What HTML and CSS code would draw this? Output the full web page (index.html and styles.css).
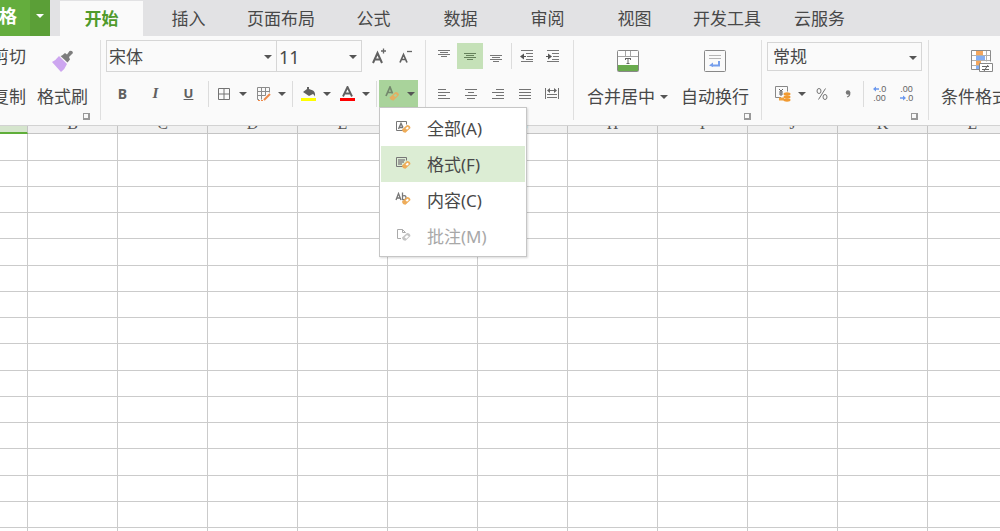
FILE: index.html
```html
<!DOCTYPE html>
<html lang="zh-CN">
<head>
<meta charset="utf-8">
<title>表格</title>
<link rel="stylesheet" href="styles.css">
</head>
<body>
<nav class="tabs">
  <button class="brand"><span class="brand-name">表格</span><span class="brand-drop"><i class="caret"></i></span></button>
  <a class="tab active" href="#">开始</a>
  <a class="tab" href="#">插入</a>
  <a class="tab" href="#">页面布局</a>
  <a class="tab" href="#">公式</a>
  <a class="tab" href="#">数据</a>
  <a class="tab" href="#">审阅</a>
  <a class="tab" href="#">视图</a>
  <a class="tab" href="#">开发工具</a>
  <a class="tab" href="#">云服务</a>
</nav>

<header class="ribbon">
  <section class="group clipboard">
    <div class="clip-col">
      <button class="text-btn">剪切</button>
      <button class="text-btn">复制</button>
    </div>
    <button class="big-btn painter">
      <svg width="22" height="22" viewBox="0 0 22 22"><path d="M10 5.500l3-2.500 2 1.500L17.500 1q3-1 3.500 2l-4 4 1 2.500-2.500 3L8.500 6z" fill="#7d7d7d"/><path d="M7 6l8 8q-2 5-6 8L0 12q4-2 7-6z" fill="#cda6f0"/></svg>
      <span>格式刷</span>
    </button>
    <button class="launcher" aria-label="剪贴板设置"></button>
  </section>

  <section class="group font">
    <div class="row top">
      <label class="pick family"><select aria-label="字体"><option>宋体</option></select></label>
      <label class="pick size"><select aria-label="字号"><option>11</option></select></label>
      <button class="icon-btn grow" aria-label="增大字号"><svg width="16" height="18" viewBox="0 0 16 18"><path d="M2 16L6.500 6L11 16M3.500 12.500H9.500" fill="none" stroke="#606060" stroke-width="2"/><path d="M10 4h5M12.500 1.500v5" stroke="#666" stroke-width="1.300" fill="none"/></svg></button>
      <button class="icon-btn" aria-label="减小字号"><svg width="16" height="18" viewBox="0 0 16 18"><path d="M3 15.500L6.500 7.500L10 15.500M4 12.500H9" fill="none" stroke="#606060" stroke-width="1.700"/><path d="M10 4.500h5" stroke="#666" stroke-width="1.300" fill="none"/></svg></button>
    </div>
    <div class="row bottom">
      <button class="style-btn bold">B</button>
      <button class="style-btn italic">I</button>
      <button class="style-btn underline">U</button>
      <span class="rule"></span>
      <button class="drop-btn" aria-label="边框"><svg width="14" height="14" viewBox="0 0 14 14"><path d="M1.500 1.500h11v11h-11zM7 1.500v11M1.500 7h11" fill="none" stroke="#737373"/></svg><i class="caret"></i></button>
      <button class="drop-btn" aria-label="绘图边框"><svg width="15" height="14" viewBox="0 0 15 14"><path d="M3 12.500H1.500v-12h12v5M1.500 4.500h12M1.500 8.500h8M5.500 .5v12M9.500 .5v8" fill="none" stroke="#8c8c8c"/><path d="M2 13.500h5" stroke="#ee8a4a" stroke-dasharray="2 1"/><path d="M8 13l6-6" fill="none" stroke="#ee8a4a" stroke-width="2"/></svg><i class="caret"></i></button>
      <span class="rule"></span>
      <button class="drop-btn" aria-label="填充颜色"><svg width="15" height="16" viewBox="0 0 15 16"><path d="M2 6l4-3V1h2v2l4 1.500q2.500 1.500 2 6-1-2-2-2.500L8 10z" fill="#606060"/><path d="M0 12h15v3H0z" fill="#ff0"/></svg><i class="caret"></i></button>
      <button class="drop-btn" aria-label="字体颜色"><svg width="15" height="16" viewBox="0 0 15 16"><path d="M3 10.500L7.500 1L12 10.500M4.500 7.500h6" fill="none" stroke="#606060" stroke-width="1.900"/><path d="M0 12h15v3H0z" fill="#f00"/></svg><i class="caret"></i></button>
      <span class="rule"></span>
      <div class="clear">
        <button class="drop-btn open" aria-label="清除" aria-expanded="true"><svg width="15" height="15" viewBox="0 0 15 15"><path d="M1 10L5 1L7.500 7.500M2.500 6.500h5" fill="none" stroke="#73876c" stroke-width="1.700"/><path d="M4.500 11.500l6-5.500q3 0 3.500 3L8.500 14.500q-3 0-4-3z" fill="#e6ae61"/><path d="M8.500 9.500l2-1.800 1.800 1.500-2 1.800z" fill="#a9d39b"/></svg><i class="caret"></i></button>
        <div class="menu" role="menu">
          <button class="item" role="menuitem"><svg width="16" height="14" viewBox="0 0 16 14"><path d="M8 10.500H1.500v-9h10v3" fill="none" stroke="#777"/><path d="M3.500 9L6 3.500l2 4M4 7.500h4" fill="none" stroke="#777" stroke-width="1.400"/><path d="M7 9.500l5-4.500q3 0 3.500 3L10.500 12.800q-3 0-3.500-3.300z" fill="#eeac59"/><path d="M10.500 8.300l2-1.500 1.500 1.300-2 1.700z" fill="#fff"/></svg><span>全部(A)</span></button>
          <button class="item hover" role="menuitem"><svg width="16" height="14" viewBox="0 0 16 14"><path d="M8 10.500H1.500v-9h10v3" fill="none" stroke="#777"/><path d="M3 4h7M3 6h6M3 8h4" stroke="#888" stroke-width="1.300"/><path d="M7 9.500l5-4.500q3 0 3.500 3L10.500 12.800q-3 0-3.500-3.300z" fill="#eeac59"/><path d="M10.500 8.300l2-1.500 1.500 1.300-2 1.700z" fill="#fff"/></svg><span>格式(F)</span></button>
          <button class="item" role="menuitem"><svg width="16" height="14" viewBox="0 0 16 14"><path d="M1 8l2.500-6.500L6 8M2 6h3.500M7.500 .5v7q3.500 .5 3.500-2T7.500 4" fill="none" stroke="#777" stroke-width="1.300"/><path d="M7 9.500l5-4.500q3 0 3.500 3L10.500 12.800q-3 0-3.500-3.300z" fill="#eeac59"/><path d="M10.500 8.300l2-1.500 1.500 1.300-2 1.700z" fill="#fff"/></svg><span>内容(C)</span></button>
          <button class="item" role="menuitem" disabled><svg width="16" height="14" viewBox="0 0 16 14"><path d="M6 10.500H2.500v-9h5l3 3M7.500 1.500v3h3" fill="none" stroke="#aaa"/><path d="M7 9.500l5-4.500q3 0 3.500 3L10.500 12.800q-3 0-3.500-3.300z" fill="#c4c4c4"/><path d="M9.500 9.200l2.500-2.200 1.800 1.500-2.500 2.200z" fill="#fff"/></svg><span>批注(M)</span></button>
        </div>
      </div>
    </div>
  </section>

  <section class="group align">
    <div class="row top">
      <button class="icon-btn" aria-label="顶端对齐"><svg width="14" height="16" viewBox="0 0 14 16"><path d="M1 2.500h12M3 4.500h8M1 6.500h12M4 8.500h6" stroke="#777"/></svg></button>
      <button class="icon-btn on" aria-label="垂直居中"><svg width="14" height="16" viewBox="0 0 14 16"><path d="M1 5.500h12M3 7.500h8M1 9.500h12M4 11.500h6" stroke="#65805b"/></svg></button>
      <button class="icon-btn" aria-label="底端对齐"><svg width="14" height="16" viewBox="0 0 14 16"><path d="M1 7.500h12M3 9.500h8M1 11.500h12M4 13.500h6" stroke="#777"/></svg></button>
      <span class="rule"></span>
      <button class="icon-btn" aria-label="减少缩进"><svg width="14" height="16" viewBox="0 0 14 16"><path d="M1 2.500h12M6 5.500h7M7 8.500h6M6 11.500h7M1 13.500h12" stroke="#777"/><path d="M2 8.500h4" stroke="#555"/><path d="M0 8.500l4-3v6z" fill="#555"/></svg></button>
      <button class="icon-btn" aria-label="增加缩进"><svg width="14" height="16" viewBox="0 0 14 16"><path d="M1 2.500h12M6 5.500h7M7 8.500h6M6 11.500h7M1 13.500h12" stroke="#777"/><path d="M0 8.500h4" stroke="#555"/><path d="M6 8.500l-4-3v6z" fill="#555"/></svg></button>
    </div>
    <div class="row bottom">
      <button class="icon-btn" aria-label="左对齐"><svg width="14" height="14" viewBox="0 0 14 14"><path d="M1 2.500h8M1 5.500h12M1 8.500h8M1 11.500h12" stroke="#737373"/></svg></button>
      <button class="icon-btn" aria-label="居中"><svg width="14" height="14" viewBox="0 0 14 14"><path d="M1 2.500h12M4 5.500h6M1 8.500h12M3 11.500h8" stroke="#737373"/></svg></button>
      <button class="icon-btn" aria-label="右对齐"><svg width="14" height="14" viewBox="0 0 14 14"><path d="M5 2.500h8M1 5.500h12M5 8.500h8M1 11.500h12" stroke="#737373"/></svg></button>
      <button class="icon-btn" aria-label="两端对齐"><svg width="14" height="14" viewBox="0 0 14 14"><path d="M1 2.500h12M1 5.500h12M1 8.500h12M1 11.500h12" stroke="#737373"/></svg></button>
      <button class="icon-btn" aria-label="分散对齐"><svg width="16" height="14" viewBox="0 0 16 14"><path d="M1.500 1v11M14.500 1v11M4 3.500h8M3 7.500h10M3 10.500h10" stroke="#737373"/><path d="M3 3.500l3-2.500v5zM13 3.500l-3-2.500v5z" fill="#666"/></svg></button>
    </div>
  </section>

  <section class="group cells">
    <button class="big-btn">
      <svg width="22" height="22" viewBox="0 0 22 22"><rect x=".5" y=".5" width="21" height="21" rx="1" fill="#fff" stroke="#888"/><path d="M1 6.500h20M8.500 1v5M13.500 1v5" stroke="#a5a5a5"/><path d="M8 8.500h6M11 8.500v5M9.500 13.500h3M8.500 8v2M13.500 8v2" stroke="#666"/><path d="M1 15h20v6H1z" fill="#6aab4e"/></svg>
      <span>合并居中<i class="caret"></i></span>
    </button>
    <button class="big-btn">
      <svg width="22" height="22" viewBox="0 0 22 22"><rect x=".5" y=".5" width="21" height="21" rx="1" fill="#fafafa" stroke="#888"/><path d="M5 5.500h12M5 8.500h12" stroke="#b5b5b5"/><path d="M15 11v4.500H8" fill="none" stroke="#759eec" stroke-width="2"/><path d="M5 15.500l4-3v4.500z" fill="#759eec"/></svg>
      <span>自动换行</span>
    </button>
    <button class="launcher" aria-label="对齐设置"></button>
  </section>

  <section class="group number">
    <div class="row top">
      <label class="pick format"><select aria-label="数字格式"><option>常规</option></select></label>
    </div>
    <div class="row bottom">
      <button class="drop-btn" aria-label="货币格式"><svg width="16" height="16" viewBox="0 0 16 16"><path d="M6 11.500H.5v-11h12v5" fill="none" stroke="#888"/><path d="M4 3l2 2 2-2M6 5v5M4 6h4M4 8h4" fill="none" stroke="#666"/><path d="M4 11.500h5v3H4z" fill="#f0a13f"/><ellipse cx="12" cy="8" rx="3.500" ry="1.700" fill="#f19a31"/><ellipse cx="12" cy="11" rx="3.500" ry="1.700" fill="#f19a31"/><ellipse cx="12" cy="14" rx="3.500" ry="1.700" fill="#f19a31"/></svg><i class="caret"></i></button>
      <button class="icon-btn" aria-label="百分比"><svg width="12" height="14" viewBox="0 0 12 14"><g fill="none" stroke="#737373"><ellipse cx="3" cy="4" rx="2" ry="2.500"/><ellipse cx="9" cy="10" rx="2" ry="2.500"/><path d="M9.500 1.500l-7 11"/></g></svg></button>
      <button class="icon-btn" aria-label="千位分隔"><svg width="8" height="14" viewBox="0 0 8 14"><circle cx="4" cy="5.500" r="2.200" fill="#777"/><path d="M5.500 5q1 4-2.500 5" fill="none" stroke="#777" stroke-width="1.300"/></svg></button>
      <span class="rule"></span>
      <button class="icon-btn decimals" aria-label="增加小数位数"><span><svg width="6" height="6" viewBox="0 0 6 6"><path d="M1 3h5" stroke="#6b98ee" stroke-width="1.500"/><path d="M0 3l3-2.500v5z" fill="#6b98ee"/></svg>.0</span><span>.00</span></button>
      <button class="icon-btn decimals" aria-label="减少小数位数"><span>.00</span><span><svg width="6" height="6" viewBox="0 0 6 6"><path d="M0 3h5" stroke="#6b98ee" stroke-width="1.500"/><path d="M6 3l-3-2.500v5z" fill="#6b98ee"/></svg>.0</span></button>
    </div>
    <button class="launcher" aria-label="数字设置"></button>
  </section>

  <section class="group styles">
    <button class="big-btn">
      <svg width="22" height="22" viewBox="0 0 22 22"><path d="M.5 .5h19v19H.5z" fill="#fff"/><path d="M.5 5.500h19M.5 10.500h19M.5 15.500h8M5.500 .5v19M15.500 .5v11" fill="none" stroke="#b0b0b0"/><path d="M5 1h7v4H5zM5 11h5v4H5z" fill="#f3a75f"/><path d="M5 6h9v4H5z" fill="#84aef3"/><path d="M5 16h3v3H5z" fill="#84aef3"/><path d="M8 19.500H.5v-19h19v11" fill="none" stroke="#8c8c8c"/><path d="M8.500 13.500h13v8h-13z" fill="#fff" stroke="#888"/><path d="M11 16.500h7M11 19.500h7M17 15l-4 6" stroke="#666" fill="none"/></svg>
      <span>条件格式<i class="caret"></i></span>
    </button>
  </section>
</header>

<main class="sheet">
  <table>
    <colgroup><col class="edge"><col span="11"></colgroup>
    <thead><tr><th class="current"></th><th>B</th><th>C</th><th>D</th><th>E</th><th>F</th><th>G</th><th>H</th><th>I</th><th>J</th><th>K</th><th>L</th></tr></thead>
    <tbody>
      <tr><td></td><td></td><td></td><td></td><td></td><td></td><td></td><td></td><td></td><td></td><td></td><td></td></tr>
      <tr><td></td><td></td><td></td><td></td><td></td><td></td><td></td><td></td><td></td><td></td><td></td><td></td></tr>
      <tr><td></td><td></td><td></td><td></td><td></td><td></td><td></td><td></td><td></td><td></td><td></td><td></td></tr>
      <tr><td></td><td></td><td></td><td></td><td></td><td></td><td></td><td></td><td></td><td></td><td></td><td></td></tr>
      <tr><td></td><td></td><td></td><td></td><td></td><td></td><td></td><td></td><td></td><td></td><td></td><td></td></tr>
      <tr><td></td><td></td><td></td><td></td><td></td><td></td><td></td><td></td><td></td><td></td><td></td><td></td></tr>
      <tr><td></td><td></td><td></td><td></td><td></td><td></td><td></td><td></td><td></td><td></td><td></td><td></td></tr>
      <tr><td></td><td></td><td></td><td></td><td></td><td></td><td></td><td></td><td></td><td></td><td></td><td></td></tr>
      <tr><td></td><td></td><td></td><td></td><td></td><td></td><td></td><td></td><td></td><td></td><td></td><td></td></tr>
      <tr><td></td><td></td><td></td><td></td><td></td><td></td><td></td><td></td><td></td><td></td><td></td><td></td></tr>
      <tr><td></td><td></td><td></td><td></td><td></td><td></td><td></td><td></td><td></td><td></td><td></td><td></td></tr>
      <tr><td></td><td></td><td></td><td></td><td></td><td></td><td></td><td></td><td></td><td></td><td></td><td></td></tr>
      <tr><td></td><td></td><td></td><td></td><td></td><td></td><td></td><td></td><td></td><td></td><td></td><td></td></tr>
      <tr><td></td><td></td><td></td><td></td><td></td><td></td><td></td><td></td><td></td><td></td><td></td><td></td></tr>
      <tr><td></td><td></td><td></td><td></td><td></td><td></td><td></td><td></td><td></td><td></td><td></td><td></td></tr>
      <tr><td></td><td></td><td></td><td></td><td></td><td></td><td></td><td></td><td></td><td></td><td></td><td></td></tr>
    </tbody>
  </table>
</main>
</body>
</html>
```
FILE: styles.css
```css
* { box-sizing: border-box; }

body {
  margin: 0;
  height: 100vh;
  display: flex;
  flex-direction: column;
  overflow: hidden;
  background: #fff;
  color: #484848;
  font: 17px/24px "Noto Sans", "Noto Sans CJK SC", sans-serif;
}

button, select {
  margin: 0;
  padding: 0;
  border: 0;
  background: none;
  color: inherit;
  font: inherit;
}

svg { display: block; flex: none; }

.caret {
  flex: none;
  border: 4px solid transparent;
  border-top-color: #555;
  border-bottom: 0;
}

/* Tab strip */
.tabs {
  flex: none;
  display: flex;
  height: 36px;
  padding-top: 1px;
  background: #e2e2e4;
}

.brand {
  display: flex;
  width: 50px;
  margin: -1px 8px 0 0;
  background: #64ad3d;
  color: #fff;
  font-size: 18px;
  font-weight: bold;
}

.brand-name {
  flex: 1;
  display: flex;
  justify-content: flex-end;
  align-self: stretch;
  padding: 4px 13px 0 0;
  min-width: 0;
  overflow: hidden;
  white-space: nowrap;
}

.brand-drop {
  display: flex;
  align-items: center;
  justify-content: center;
  align-self: stretch;
  width: 20px;
  padding-bottom: 4px;
  background: #5b9f37;
}

.brand .caret { border-top-color: #fff; }

.tab {
  min-width: 83px;
  margin: 0 2px;
  padding: 6px 13px 0;
  color: #484848;
  text-align: center;
  text-decoration: none;
  white-space: nowrap;
}

.tab.active {
  background: #fafafa;
  color: #4f9a2b;
  font-weight: bold;
}

/* Ribbon */
.ribbon {
  position: relative;
  z-index: 1;
  flex: none;
  display: flex;
  padding: 4px 0 5px;
  background: #fafafa;
  border-bottom: 1px solid #d2d2d2;
  white-space: nowrap;
}

.group {
  position: relative;
  flex: none;
  height: 80px;
  border-right: 1px solid #dfdfdf;
}

.row { display: flex; align-items: center; }
.row.top { height: 32px; }
.row.bottom { height: 27px; margin-top: 8px; }

.rule {
  width: 1px;
  height: 26px;
  background: #dcdcdc;
}

.launcher {
  position: absolute;
  right: 10px;
  bottom: 0;
  width: 7px;
  height: 7px;
  border: 1px solid #999;
  border-right-width: 2px;
  border-bottom-width: 2px;
}

.icon-btn {
  flex: none;
  display: flex;
  align-items: center;
  justify-content: center;
  width: 26px;
  height: 26px;
}

.icon-btn.on { background: #c5e1b8; }

.drop-btn {
  flex: none;
  display: flex;
  align-items: center;
  justify-content: space-between;
  width: 39px;
  height: 27px;
  padding: 0 3px 0 6px;
}

.big-btn {
  display: flex;
  flex-direction: column;
  align-items: center;
  gap: 13px;
  padding-top: 10px;
}

.big-btn span { display: flex; align-items: center; gap: 5px; }

.clipboard { display: flex; align-items: flex-start; gap: 11px; width: 101px; }

.clip-col {
  display: flex;
  flex-direction: column;
  align-items: flex-end;
  gap: 16px;
  width: 26px;
  padding-top: 5px;
  overflow: hidden;
}

.font { width: 325px; padding: 0 0 0 5px; }
.font .style-btn { width: 33px; }

.style-btn {
  color: #606060;
  font: bold 15px/27px "Liberation Serif", serif;
}

.bold { font-family: "Noto Sans", sans-serif; font-size: 14px; }
.italic { font-style: italic; }
.underline { text-decoration: underline; font-family: "Noto Sans", sans-serif; font-size: 13px; }
.font .row.bottom .rule { margin: 0 2px 0 3px; }

.pick { position: relative; display: flex; border: 1px solid #d6d6d6; }
.pick::after {
  content: "";
  position: absolute;
  top: 14px;
  right: 4px;
  border: 4px solid transparent;
  border-top-color: #555;
  border-bottom: 0;
  pointer-events: none;
}
.pick select { width: 100%; height: 30px; padding: 2px 0 0 2px; appearance: none; }
.pick.family { width: 171px; }
.pick.size { width: 85px; border-left: 0; }
.pick.size select { font-size: 18px; }
.grow { margin-left: 4px; }

.clear { position: relative; }
.open { background: #a9d39b; }

.menu {
  position: absolute;
  top: 100%;
  left: 0;
  width: 148px;
  padding: 2px 1px;
  background: #fff;
  border: 1px solid #c6c6c6;
  box-shadow: 1px 1px 2px rgba(0, 0, 0, .15);
}

.item {
  display: flex;
  align-items: center;
  gap: 16px;
  width: 100%;
  height: 36px;
  padding: 1px 0 0 14px;
}

.item svg { margin-bottom: 3px; }
.item.hover { background: #dcedd4; }
.item:disabled { color: #a8a8a8; }

.align { width: 148px; padding-left: 4px; }
.align .row.top { padding-left: 1px; }
.align .rule { margin: 0 2px; }
.align .row.bottom .icon-btn { width: 27px; }

.cells { display: flex; align-items: flex-start; gap: 13px; width: 188px; padding-left: 13px; }

.number { width: 167px; padding-left: 5px; }
.pick.format { width: 155px; }
.pick.format::after { top: 13px; }
.pick.format select { height: 27px; padding-left: 5px; }
.number .drop-btn { width: 42px; padding-left: 8px; }
.number .rule { margin: 0 2px; }
.number .decimals { width: 27px; }

.decimals {
  flex-direction: column;
  color: #666;
  font: 9px/9px "Liberation Sans", sans-serif;
}

.decimals span { display: flex; align-items: center; height: 9px; }

.styles { padding-left: 12px; border-right: 0; }

/* Sheet */
.sheet { flex: 1; min-height: 0; margin-top: -19px; overflow: hidden; }

table {
  width: 1018px;
  table-layout: fixed;
  border-collapse: separate;
  border-spacing: 0;
}

.edge { width: 28px; }

th {
  height: 27px;
  padding: 8px 0 0;
  background: #f0f0f0;
  border: solid #c4c4c4;
  border-width: 0 1px 1px 0;
  color: #555;
  font: 16px/18px "Liberation Serif", serif;
}

th.current { background: #d5e5cd; border-bottom: 2px solid #5fae3a; }

td {
  height: 26px;
  padding: 0;
  border: solid #cbcbcb;
  border-width: 0 1px 1px 0;
}

tbody tr:nth-child(4n + 1) td { height: 27px; }
```
